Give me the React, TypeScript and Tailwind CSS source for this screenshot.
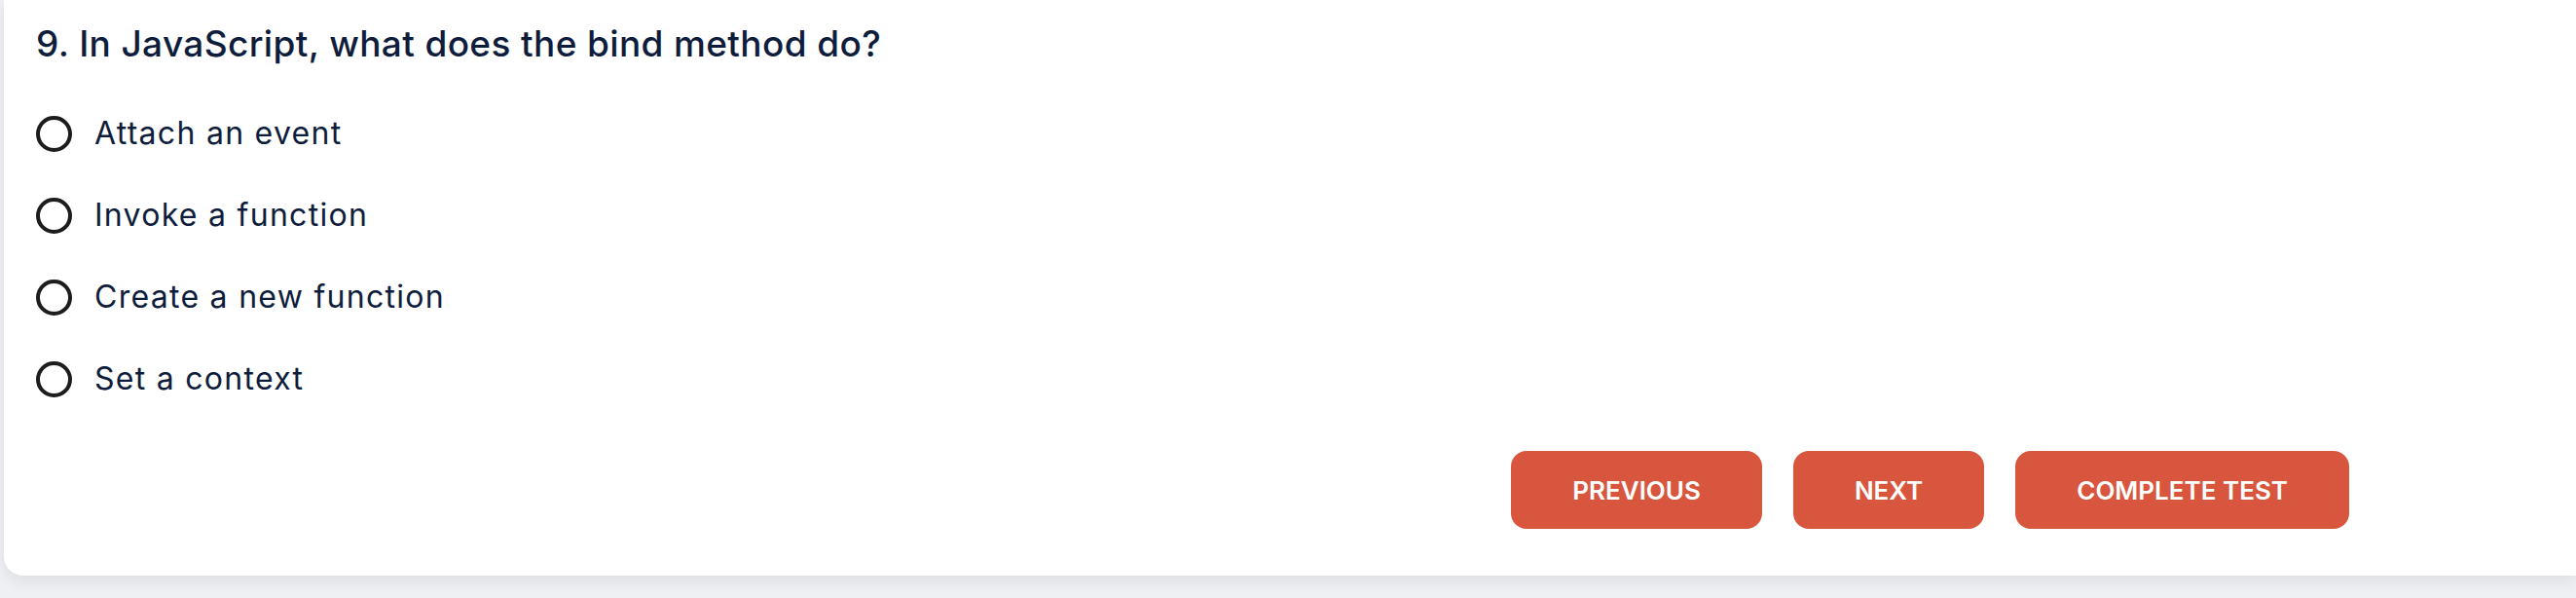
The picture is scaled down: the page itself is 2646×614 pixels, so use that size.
import React from 'react';

const options = ['Attach an event', 'Invoke a function', 'Create a new function', 'Set a context'];

export default function App() {
  return (
    <div className="min-h-screen bg-[#eff0f3] pl-[4px] font-['Inter',sans-serif]">
      <div className="bg-white rounded-bl-[20px] shadow-[0_6px_16px_rgba(15,23,42,0.08)] pt-[18px] pb-[48px] pl-[33px] pr-[233px]">
        <h2 className="text-[37px] leading-[54px] tracking-[0.01em] font-medium text-[#0f1d3c]">
          9. In JavaScript, what does the bind method do?
        </h2>

        {/* answers */}
        <div className="mt-[23px] flex flex-col">
          {options.map((opt) => (
            <label key={opt} className="h-[84px] flex items-center gap-[23px] cursor-pointer">
              <span className="w-[37px] h-[37px] rounded-full border-[4px] border-[#1c1c1e] shrink-0" />
              <span className="text-[32px] tracking-[0.04em] text-[#0f1d3c]">{opt}</span>
            </label>
          ))}
        </div>

        <div className="mt-[32px] flex justify-end gap-[32px]">
          <button className="h-[80px] px-[63px] rounded-[16px] bg-[#d8563e] text-white text-[26px] font-semibold uppercase">
            Previous
          </button>
          <button className="h-[80px] px-[63px] rounded-[16px] bg-[#d8563e] text-white text-[26px] font-semibold uppercase">
            Next
          </button>
          <button className="h-[80px] px-[63px] rounded-[16px] bg-[#d8563e] text-white text-[26px] font-semibold uppercase">
            Complete Test
          </button>
        </div>
      </div>
    </div>
  );
}
